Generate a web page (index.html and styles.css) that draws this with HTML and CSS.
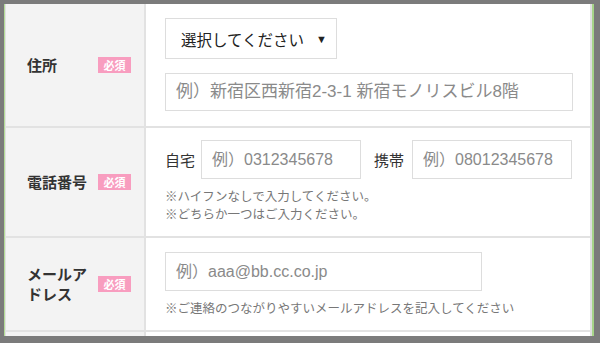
FILE: index.html
```html
<!DOCTYPE html>
<html lang="ja">
<head>
  <meta charset="utf-8">
  <title>お問い合わせフォーム</title>
  <link rel="stylesheet" href="styles.css">
</head>
<body>
  <div class="frame">
    <div class="form">
      <div class="row">
        <div class="head"><span class="name">住所</span><span class="req">必須</span></div>
        <div class="cell addr">
          <div class="select">選択してください<span class="arrow">▼</span></div>
          <input class="text wide" type="text" placeholder="例）新宿区西新宿2-3-1 新宿モノリスビル8階">
        </div>
      </div>
      <div class="row">
        <div class="head"><span class="name">電話番号</span><span class="req">必須</span></div>
        <div class="cell phone">
          <div class="tels">
            <span class="tel-label">自宅</span>
            <input class="text tel" type="text" placeholder="例）0312345678">
            <span class="tel-label second">携帯</span>
            <input class="text tel" type="text" placeholder="例）08012345678">
          </div>
          <p class="note">※ハイフンなしで入力してください。<br>※どちらか一つはご入力ください。</p>
        </div>
      </div>
      <div class="row">
        <div class="head"><span class="name">メールアドレス</span><span class="req">必須</span></div>
        <div class="cell">
          <input class="text mail" type="text" placeholder="例）aaa@bb.cc.co.jp">
          <p class="note">※ご連絡のつながりやすいメールアドレスを記入してください</p>
        </div>
      </div>
      <div class="row">
        <div class="head"></div>
        <div class="cell"></div>
      </div>
    </div>
  </div>
</body>
</html>
```

FILE: styles.css
```css
* {
    box-sizing: border-box;
}
body {
    margin: 0;
    padding: 4px 6px 7px 4px;
    background: #7b7b7b;
    font-family: "Liberation Sans", "Noto Sans CJK JP", sans-serif;
    color: #333;
}

.frame {
    height: 332px;
    overflow: hidden;
    background: #fff;
    border-left: 1px solid #b3dc96;
    border-right: 2px solid #a6d488;
}

.form {
    border-left: 1px solid #e0e0e0;
    border-right: 2px solid #e0e0e0;
}

.row {
    display: grid;
    grid-template-columns: 140px 1fr;
    border-bottom: 2px solid #e2e2e2;
}

.head {
    display: flex;
    align-items: center;
    padding: 0 13px 0 21px;
    background: #f3f3f3;
    border-right: 2px solid #e2e2e2;
}
.name {
    width: 62px;
    font-family: "Noto Sans CJK JP", sans-serif;
    font-size: 15px;
    font-weight: bold;
    line-height: 20px;
    color: #333;
}
.req {
    margin-left: auto;
    width: 33px;
    height: 16px;
    line-height: 16px;
    text-align: center;
    font-family: "Noto Sans CJK JP", sans-serif;
    font-size: 11px;
    font-weight: bold;
    color: #fff;
    background: #f89dbf;
}

.cell {
    padding: 14px 16px 13px 19px;
}
.cell.addr {
    padding-bottom: 15px;
}
.cell.phone {
    padding-top: 12px;
}

.select {
    display: flex;
    align-items: center;
    width: 172px;
    height: 41px;
    padding: 0 9px 0 15px;
    border: 1px solid #ddd;
    font-family: "Noto Sans CJK JP", sans-serif;
    font-size: 15.5px;
    color: #222;
}
.arrow {
    margin-left: auto;
    font-family: "Liberation Sans", sans-serif;
    font-size: 11px;
}

.text {
    display: block;
    height: 39px;
    padding: 0 10px;
    border: 1px solid #ddd;
    font-family: inherit;
    font-size: 16px;
    color: #333;
    outline: none;
}
.text::placeholder {
    color: #8a8a8a;
}
.wide {
    width: 408px;
    height: 38px;
    margin-top: 14px;
    font-size: 17px;
}
.mail {
    width: 317px;
}

.tels {
    display: flex;
    align-items: center;
}
.tel-label {
    margin-right: 6px;
    font-family: "Noto Sans CJK JP", sans-serif;
    font-size: 15px;
    color: #333;
}
.tel-label.second {
    margin-left: 13px;
    margin-right: 8px;
}
.tel {
    width: 160px;
}

.note {
    margin: 8px 0 0;
    font-family: "Noto Sans CJK JP", sans-serif;
    font-size: 12.5px;
    line-height: 18px;
    color: #777;
}
```
